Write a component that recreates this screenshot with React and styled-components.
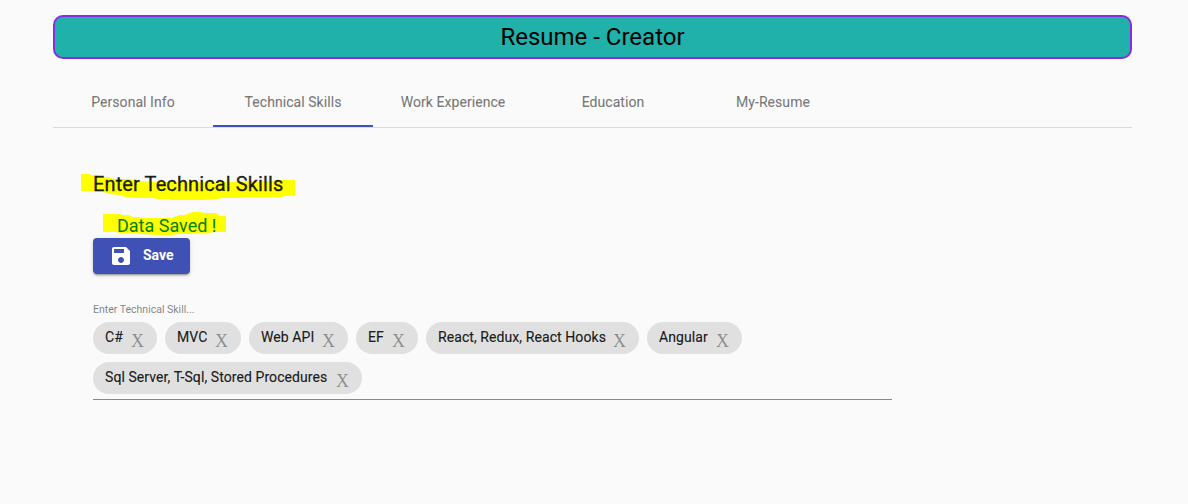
import React from "react";
import styled, { createGlobalStyle } from "styled-components";

const GlobalStyle = createGlobalStyle`
  * { box-sizing: border-box; }
  body {
    margin: 0;
    background: #fafafa;
    font-family: Roboto, "Liberation Sans", sans-serif;
    color: rgba(0, 0, 0, 0.87);
  }
`;

const Page = styled.div`
  min-height: 504px;
  padding: 15px 56px 0 53px;
`;

const Banner = styled.header`
  display: flex;
  align-items: center;
  justify-content: center;
  height: 44px;
  border: 2px solid blueviolet;
  border-radius: 10px;
  background: lightseagreen;
  color: #000;
  font-size: 24px;
  line-height: 28px;
`;

const Tabs = styled.nav`
  display: flex;
  height: 50px;
  margin-top: 19px;
  border-bottom: 1px solid rgba(0, 0, 0, 0.12);
`;

const Tab = styled.a`
  width: 160px;
  height: 49px;
  line-height: 48px;
  text-align: center;
  font-size: 14px;
  font-weight: 400;
  letter-spacing: 0.06px;
  -webkit-text-stroke: 0.15px;
  color: rgba(0, 0, 0, 0.52);
  border-bottom: 2px solid ${(p) => (p.$active ? "#3f51b5" : "transparent")};
`;

const Panel = styled.main`
  display: flex;
  flex-direction: column;
  align-items: flex-start;
  width: 839px;
  padding: 43px 0 0 40px;
`;

const Marked = styled.div`
  position: relative;
  isolation: isolate;
`;

const Marker = styled.svg`
  position: absolute;
  z-index: -1;
  left: ${(p) => p.$left}px;
  top: ${(p) => p.$top}px;
  fill: #ffff00;
`;

const Title = styled.h2`
  margin: 0;
  height: 26px;
  font-size: 20px;
  line-height: 26px;
  font-weight: 400;
  letter-spacing: 0.11px;
  -webkit-text-stroke: 0.35px;
`;

const Status = styled.p`
  margin: 18px 0 0 24px;
  height: 22px;
  font-size: 18px;
  line-height: 22px;
  color: green;
`;

const SaveButton = styled.button`
  display: flex;
  align-items: center;
  width: 97px;
  height: 36px;
  margin-top: 1px;
  padding: 0 0 2px 16px;
  border: 0;
  border-radius: 4px;
  background: #3f51b5;
  color: #fff;
  font: 700 14px/34px Roboto, sans-serif;
  gap: 10px;
  box-shadow: 0 3px 1px -2px rgba(0, 0, 0, 0.2), 0 2px 2px 0 rgba(0, 0, 0, 0.14),
    0 1px 5px 0 rgba(0, 0, 0, 0.12);

  svg {
    width: 24px;
    height: 24px;
    margin-top: 2px;
    fill: currentColor;
  }
`;

const Field = styled.section`
  width: 100%;
  height: 98px;
  margin-top: 28px;
  border-bottom: 1px solid rgba(0, 0, 0, 0.45);
`;

const FieldLabel = styled.label`
  display: block;
  height: 20px;
  font-size: 10.5px;
  line-height: 15px;
  color: rgba(0, 0, 0, 0.5);
`;

const Chips = styled.div`
  display: flex;
  flex-wrap: wrap;
  gap: 8px;
`;

const Chip = styled.div`
  display: flex;
  justify-content: space-between;
  width: ${(p) => p.$width}px;
  height: 32px;
  padding: 0 13px 0 12px;
  border-radius: 16px;
  background: #e0e0e0;
  font-size: 14px;
  line-height: 31px;
  font-weight: 400;
  letter-spacing: 0.08px;
  -webkit-text-stroke: 0.2px;
  white-space: nowrap;
`;

const Remove = styled.span`
  color: rgba(0, 0, 0, 0.4);
  font: 400 18px/39px "Liberation Serif", serif;
  letter-spacing: 0;
  -webkit-text-stroke: 0;
`;

const tabs = ["Personal Info", "Technical Skills", "Work Experience", "Education", "My-Resume"];

const skills = [
  ["C#", 64],
  ["MVC", 76],
  ["Web API", 99],
  ["EF", 62],
  ["React, Redux, React Hooks", 213],
  ["Angular", 95],
  ["Sql Server, T-Sql, Stored Procedures", 269],
];

export default function App() {
  return (
    <>
      <GlobalStyle />
      <Page>
        <Banner>Resume - Creator</Banner>
        <Tabs>
          {tabs.map((t) => (
            <Tab key={t} $active={t === "Technical Skills"}>{t}</Tab>
          ))}
        </Tabs>
        <Panel>
          <Marked>
            <Marker $left={-12} $top={2} width="215" height="28" viewBox="81 173 215 28" aria-hidden="true">
              <path d="M81 174H89L91 175H97L100 177H107L114 179H128L138 181L155 182H230L250 181L271 181L283 180H295V196H285L281 197H245L240 198H223L217 199L203 200H172L168 199H158L153 198H135L125 197L120 195L109 194L104 192H96L90 191H81Z" />
            </Marker>
            <Title>Enter Technical Skills</Title>
          </Marked>
          <Marked>
            <Marker $left={10} $top={15} width="124" height="24" viewBox="103 212 124 24" aria-hidden="true">
              <path d="M103 214H119L123 215H129L132 217H138L143 218H171L177 216L179 215H184L190 213L193 212H200L204 213H216L218 214L219 216H226V232H213L209 233H196L190 234H180L170 235H160L140 234L137 233H119L116 232H103Z" />
            </Marker>
            <Status>Data Saved !</Status>
          </Marked>
          <SaveButton>
            <svg viewBox="0 0 24 24" aria-hidden="true">
              <path d="M17 3H5c-1.11 0-2 .9-2 2v14c0 1.1.89 2 2 2h14c1.1 0 2-.9 2-2V7l-4-4zm-5 16c-1.66 0-3-1.34-3-3s1.34-3 3-3 3 1.34 3 3-1.34 3-3 3zm3-10H5V5h10v4z" />
            </svg>
            Save
          </SaveButton>
          <Field>
            <FieldLabel>Enter Technical Skill...</FieldLabel>
            <Chips>
              {skills.map(([name, width]) => (
                <Chip key={name} $width={width}>
                  {name}
                  <Remove>X</Remove>
                </Chip>
              ))}
            </Chips>
          </Field>
        </Panel>
      </Page>
    </>
  );
}
